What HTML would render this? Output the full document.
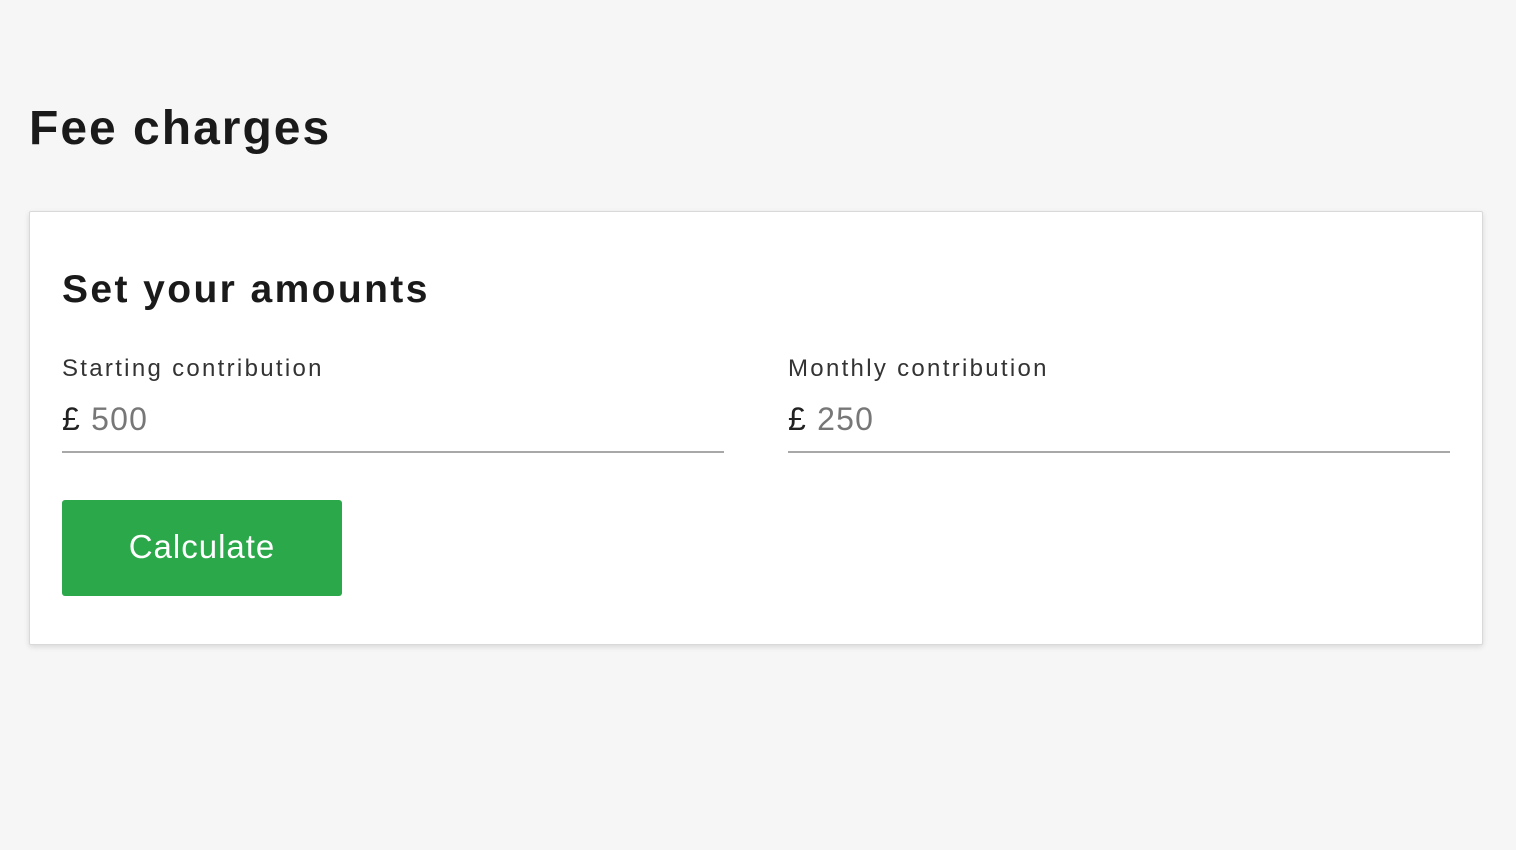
<!DOCTYPE html>
<html><head><meta charset="utf-8"><style>
body{margin:0;background:#f6f6f6;font-family:"Liberation Sans",sans-serif;width:1516px;height:850px;overflow:hidden;position:relative;color:#1a1a1a}
h1{position:absolute;left:29px;top:100px;margin:0;font-size:48px;font-weight:bold;line-height:58px;letter-spacing:2px}
.card{position:absolute;left:29px;top:211px;width:1452px;height:432px;background:#fff;border:1px solid #d9d9d9;border-radius:2px;box-shadow:0 2px 6px rgba(0,0,0,0.12)}
h2{position:absolute;left:32px;top:54px;margin:0;font-size:39px;font-weight:bold;line-height:48px;letter-spacing:2.4px}
.f{position:absolute;top:140px;width:662px}
.lab{font-size:24px;color:#333;line-height:34px;letter-spacing:2.3px}
.val{font-size:32px;line-height:44px;margin-top:11px;color:#777;padding-bottom:10px;border-bottom:2px solid #a8a8a8;letter-spacing:1.2px}
.val b{color:#222;font-weight:normal}
.btn{position:absolute;left:32px;top:288px;width:280px;height:96px;background:#2aa84a;border-radius:3px;color:#fff;font-size:33px;line-height:94px;text-align:center;letter-spacing:1px}
</style></head><body>
<h1>Fee charges</h1>
<div class="card">
<h2>Set your amounts</h2>
<div class="f" style="left:32px"><div class="lab">Starting contribution</div><div class="val"><b>£</b> 500</div></div>
<div class="f" style="left:758px"><div class="lab">Monthly contribution</div><div class="val"><b>£</b> 250</div></div>
<div class="btn">Calculate</div>
</div>
</body></html>
